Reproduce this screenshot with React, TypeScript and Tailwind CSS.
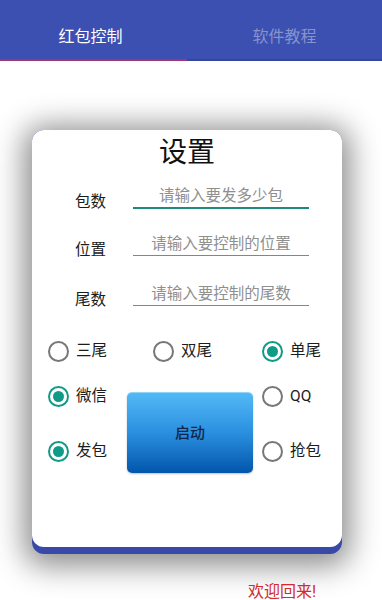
import { useState } from "react";

function Radio({ checked, label }: { checked?: boolean; label: string }) {
  return (
    <div className="flex items-center h-[24px] gap-[7px]">
      <span
        className={`w-[21px] h-[21px] rounded-full border-2 flex items-center justify-center ${
          checked ? "border-[#129a88]" : "border-[#777]"
        }`}
      >
        {checked && <span className="w-[11px] h-[11px] rounded-full bg-[#129a88]" />}
      </span>
      <span className="text-[15.5px] leading-[22px] text-[#1c1c1c]">{label}</span>
    </div>
  );
}

function Field({ label, hint, active, mt }: { label: string; hint: string; active?: boolean; mt: string }) {
  return (
    <div className={`flex items-start h-[24px] pl-[43px] ${mt}`}>
      <div className="w-[58px] mt-[6px] text-[15.5px] leading-[22px] text-[#1c1c1c]">{label}</div>
      <div
        className={`w-[176px] text-center text-[15.5px] leading-[22px] text-[#8f8f8f] ${
          active ? "border-b-2 border-[#1f8a7c]" : "border-b-[1.5px] border-[#858585]"
        }`}
      >
        {hint}
      </div>
    </div>
  );
}

export default function App() {
  const [tab] = useState(0);

  return (
    <div className="w-[382px] h-[600px] overflow-hidden bg-white font-[Roboto,'Noto_Sans_CJK_SC',sans-serif]">
      <header className="bg-[#3b50b1] h-[61px] flex">
        <div className="w-[187px] flex flex-col">
          <div className="flex-1 flex items-center justify-center pt-[14px] pr-[6px] text-[16px] text-white">
            红包控制
          </div>
          <div className={`h-[2px] ${tab === 0 ? "bg-[#a23674]" : ""}`} />
        </div>
        <div className="flex-1 flex flex-col">
          <div className="flex-1 flex items-center justify-center pt-[14px] text-[16px] text-[#8893cc]">
            软件教程
          </div>
          <div className="h-[2px] bg-[#34479e]" />
        </div>
      </header>

      <div className="ml-[32px] mt-[69px] w-[310px] rounded-[12px] bg-[#3949a8] pb-[7px] shadow-[0_4px_30px_8px_rgba(0,0,0,0.45)]">
        <div className="h-[417px] rounded-[12px] bg-white pt-[5px]">
          <h1 className="text-center text-[28px] leading-[36px] text-[#111]">设置</h1>

          <Field label="包数" hint="请输入要发多少包" active mt="mt-[14px]" />
          <Field label="位置" hint="请输入要控制的位置" mt="mt-[24px]" />
          <Field label="尾数" hint="请输入要控制的尾数" mt="mt-[26px]" />

          <div className="flex pl-[16px] mt-[32px]">
            <div className="w-[105px]">
              <Radio label="三尾" />
            </div>
            <div className="w-[109px]">
              <Radio label="双尾" />
            </div>
            <Radio checked label="单尾" />
          </div>

          <div className="flex items-start pl-[16px] mt-[21px]">
            <div className="w-[79px] flex flex-col gap-[31px]">
              <Radio checked label="微信" />
              <Radio checked label="发包" />
            </div>
            <button className="mt-[8px] w-[126px] h-[81px] rounded-[5px] bg-linear-to-b from-[#52b9f6] via-[#2a8fdf] to-[#0256ab] border-t border-[#8fd4fb] text-[15px] font-medium text-[#10264a] shadow-[0_1px_2px_rgba(0,0,0,0.25)]">
              启动
            </button>
            <div className="ml-[9px] flex flex-col gap-[31px]">
              <Radio label="QQ" />
              <Radio label="抢包" />
            </div>
          </div>
        </div>
      </div>

      <div className="pl-[248px] mt-[26px] text-[16px] leading-[24px] text-[#d12b2b]">欢迎回来!</div>
    </div>
  );
}
